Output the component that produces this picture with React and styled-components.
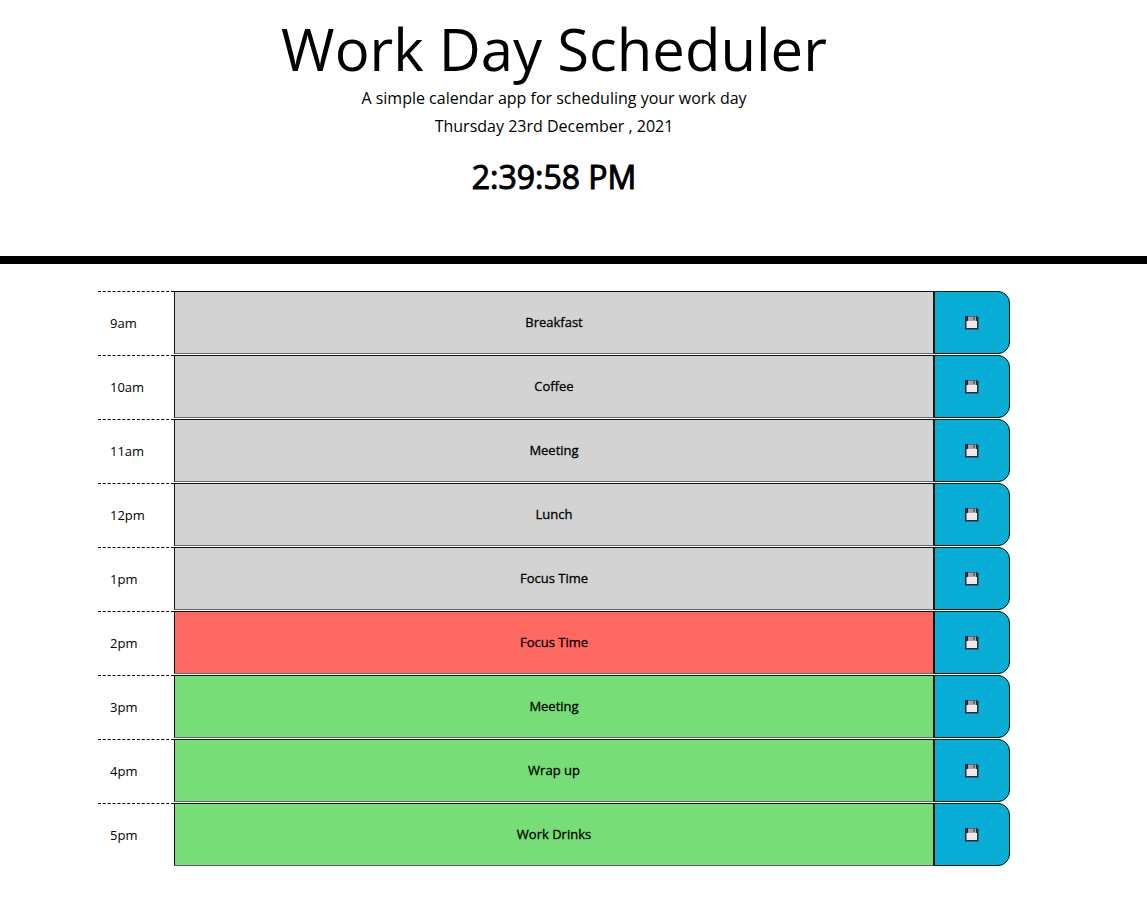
import React, { useState } from "react";
import styled, { createGlobalStyle } from "styled-components";

const GlobalStyle = createGlobalStyle`
  * { box-sizing: border-box; }
  body {
    margin: 0;
    background: #fff;
    color: #000;
    font-family: "Open Sans", "Liberation Sans", sans-serif;
    font-size: 16px;
    line-height: 28px;
  }
`;

const Header = styled.header`
  padding: 14px 39px 58px 0;
  border-bottom: 8px solid #000;
  text-align: center;
`;

const Title = styled.h1`
  margin: 0;
  font-size: 58px;
  font-weight: 400;
  line-height: 70px;
`;

const Lead = styled.p`
  margin: 0;
`;

const Clock = styled.time`
  display: block;
  margin-top: 16px;
  font-size: 32px;
  line-height: 42px;
  -webkit-text-stroke: 1px #000;
`;

const Planner = styled.main`
  padding: 27px 39px 44px 0;
`;

const Blocks = styled.div`
  display: grid;
  gap: 1px;
  max-width: 912px;
  margin: 0 auto;
`;

const TimeBlock = styled.form`
  display: grid;
  grid-template-columns: 1fr 10fr 1fr;
  height: 63px;
`;

const Hour = styled.label`
  display: flex;
  align-items: center;
  padding-left: 12px;
  border-top: 1px dashed #000;
  font-size: 13px;
`;

const fills = { past: "#d3d3d3", present: "#ff6961", future: "#77dd77" };

const Task = styled.input`
  width: 100%;
  min-width: 0;
  padding: 0 0 2px;
  border: 1px solid #111;
  border-bottom-color: #666;
  border-radius: 0;
  background: ${({ $when }) => fills[$when]};
  color: #000;
  font-family: inherit;
  font-size: 13px;
  text-align: center;
  -webkit-text-stroke: 0.3px #000;
  outline-offset: -3px;
`;

const SaveButton = styled.button`
  display: flex;
  align-items: center;
  justify-content: center;
  padding: 0 2px 0 0;
  border: 1px solid #111;
  border-radius: 0 12px 12px 0;
  background: #06aed5;
  cursor: pointer;
  &:hover { background: #0499bc; }
`;

const FloppyIcon = () => (
  <svg width="15" height="14" viewBox="0 0 15 14" aria-hidden="true">
    <path d="M1 0H13L14.5 1.5V13.5H1Z" fill="#2b2838" />
    <path d="M4 0.5H12V5H4Z" fill="#a5a3a8" />
    <path d="M9.5 0.5H10.5V4H9.5Z" fill="#37323e" />
    <path d="M2.5 5H13V12H2.5Z" fill="#f0e6ec" />
  </svg>
);

const schedule = [
  ["9am", "Breakfast", "past"],
  ["10am", "Coffee", "past"],
  ["11am", "Meeting", "past"],
  ["12pm", "Lunch", "past"],
  ["1pm", "Focus Time", "past"],
  ["2pm", "Focus Time", "present"],
  ["3pm", "Meeting", "future"],
  ["4pm", "Wrap up", "future"],
  ["5pm", "Work Drinks", "future"],
];

function Slot({ hour, initialTask, when }) {
  const [task, setTask] = useState(initialTask);
  const id = `task-${hour}`;
  return (
    <TimeBlock onSubmit={(event) => event.preventDefault()}>
      <Hour htmlFor={id}>{hour}</Hour>
      <Task
        id={id}
        type="text"
        $when={when}
        value={task}
        onChange={(event) => setTask(event.target.value)}
      />
      <SaveButton type="submit" aria-label={`Save ${hour}`}>
        <FloppyIcon />
      </SaveButton>
    </TimeBlock>
  );
}

export default function App() {
  return (
    <>
      <GlobalStyle />
      <Header>
        <Title>Work Day Scheduler</Title>
        <Lead>A simple calendar app for scheduling your work day</Lead>
        <Lead>Thursday 23rd December , 2021</Lead>
        <Clock>2:39:58 PM</Clock>
      </Header>
      <Planner>
        <Blocks>
          {schedule.map(([hour, task, when]) => (
            <Slot key={hour} hour={hour} initialTask={task} when={when} />
          ))}
        </Blocks>
      </Planner>
    </>
  );
}
